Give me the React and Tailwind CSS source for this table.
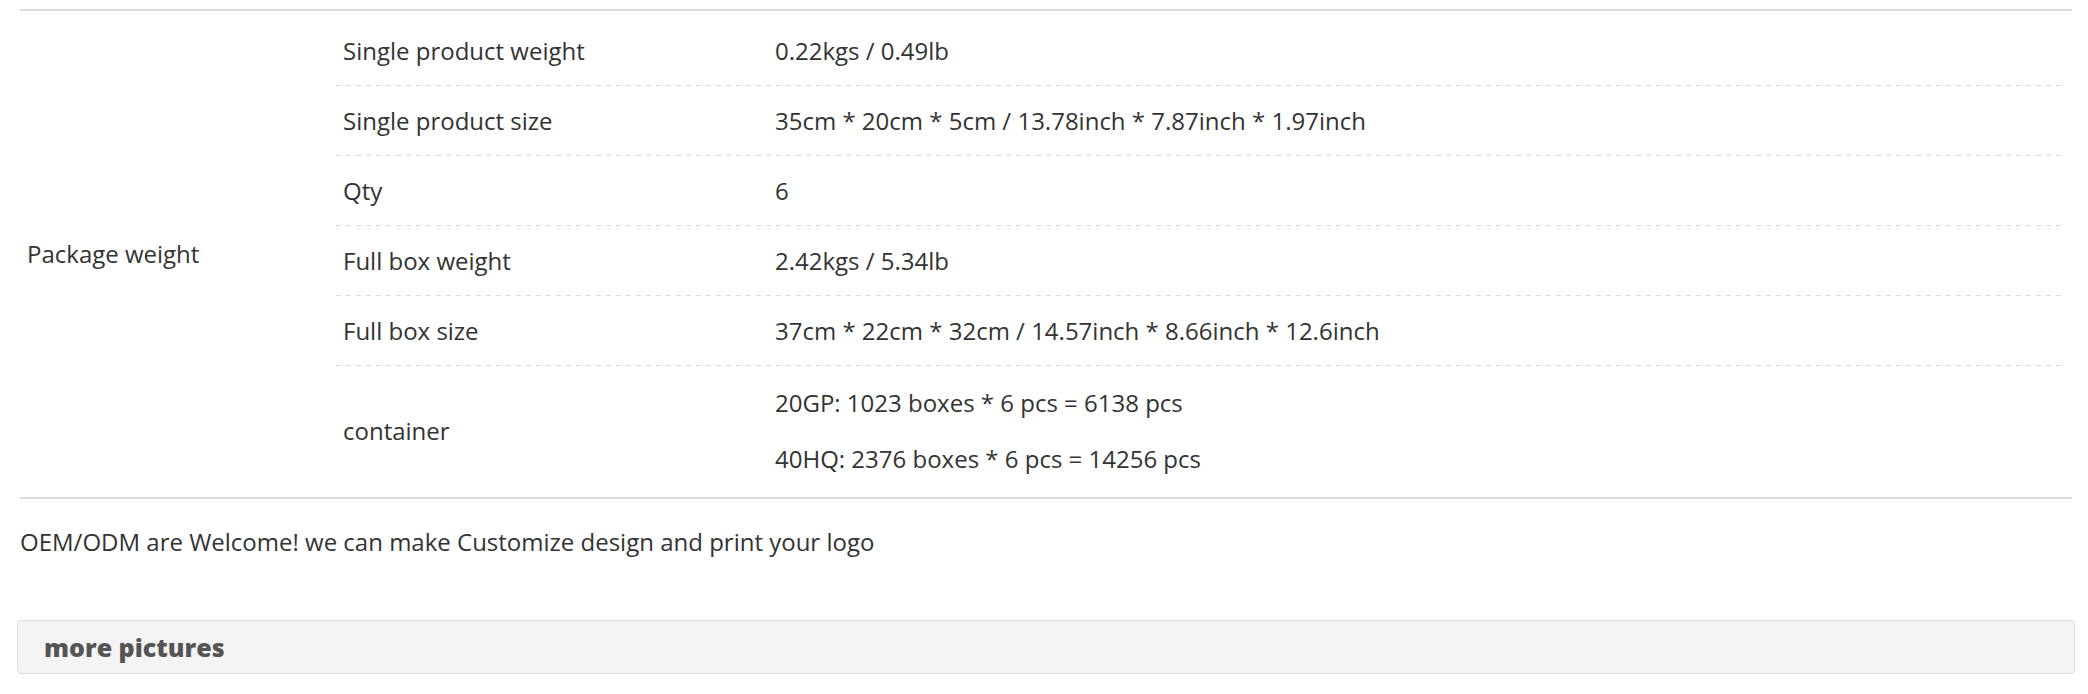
import React from "react";

const rows = [
  ["Single product weight", ["0.22kgs / 0.49lb"]],
  ["Single product size", ["35cm * 20cm * 5cm / 13.78inch * 7.87inch * 1.97inch"]],
  ["Qty", ["6"]],
  ["Full box weight", ["2.42kgs / 5.34lb"]],
  ["Full box size", ["37cm * 22cm * 32cm / 14.57inch * 8.66inch * 12.6inch"]],
];

export default function App() {
  return (
    <div className="w-[2088px] h-[694px] bg-white pt-[9px] font-['Open_Sans',sans-serif] text-[24px] leading-[36px] text-[#333] overflow-hidden">
      <div className="ml-[20px] mr-[16px] flex border-t-2 border-b-2 border-[#dddddd] py-[5px]">
        <div className="w-[316px] shrink-0 pl-[7px] flex items-center">Package weight</div>
        <div className="flex-1 flex flex-col mr-[6px]">
          {rows.map(([label, vals]) => (
            <div
              key={label}
              className="flex pt-[17px] pb-[17px] bg-[linear-gradient(to_right,#d9d9d9_5px,transparent_5px)] bg-[length:10px_1px] bg-repeat-x bg-bottom"
            >
              <div className="w-[432px] shrink-0 pl-[7px]">{label}</div>
              <div className="pl-[7px]">{vals[0]}</div>
            </div>
          ))}
          <div className="flex items-center pt-[19px] pb-[15px]">
            <div className="w-[432px] shrink-0 pl-[7px]">container</div>
            <div className="pl-[7px] flex flex-col gap-[20px]">
              <p>20GP: 1023 boxes * 6 pcs = 6138 pcs</p>
              <p>40HQ: 2376 boxes * 6 pcs = 14256 pcs</p>
            </div>
          </div>
        </div>
      </div>
      <p className="ml-[20px] mt-[25px]">OEM/ODM are Welcome! we can make Customize design and print your logo</p>
      <div className="ml-[17px] mr-[13px] mt-[60px] h-[54px] border border-[#dddddd] rounded-[4px] bg-[#f4f4f4] pl-[26px] flex items-center">
        <span className="text-[25px] font-extrabold text-[#555]">more pictures</span>
      </div>
    </div>
  );
}
